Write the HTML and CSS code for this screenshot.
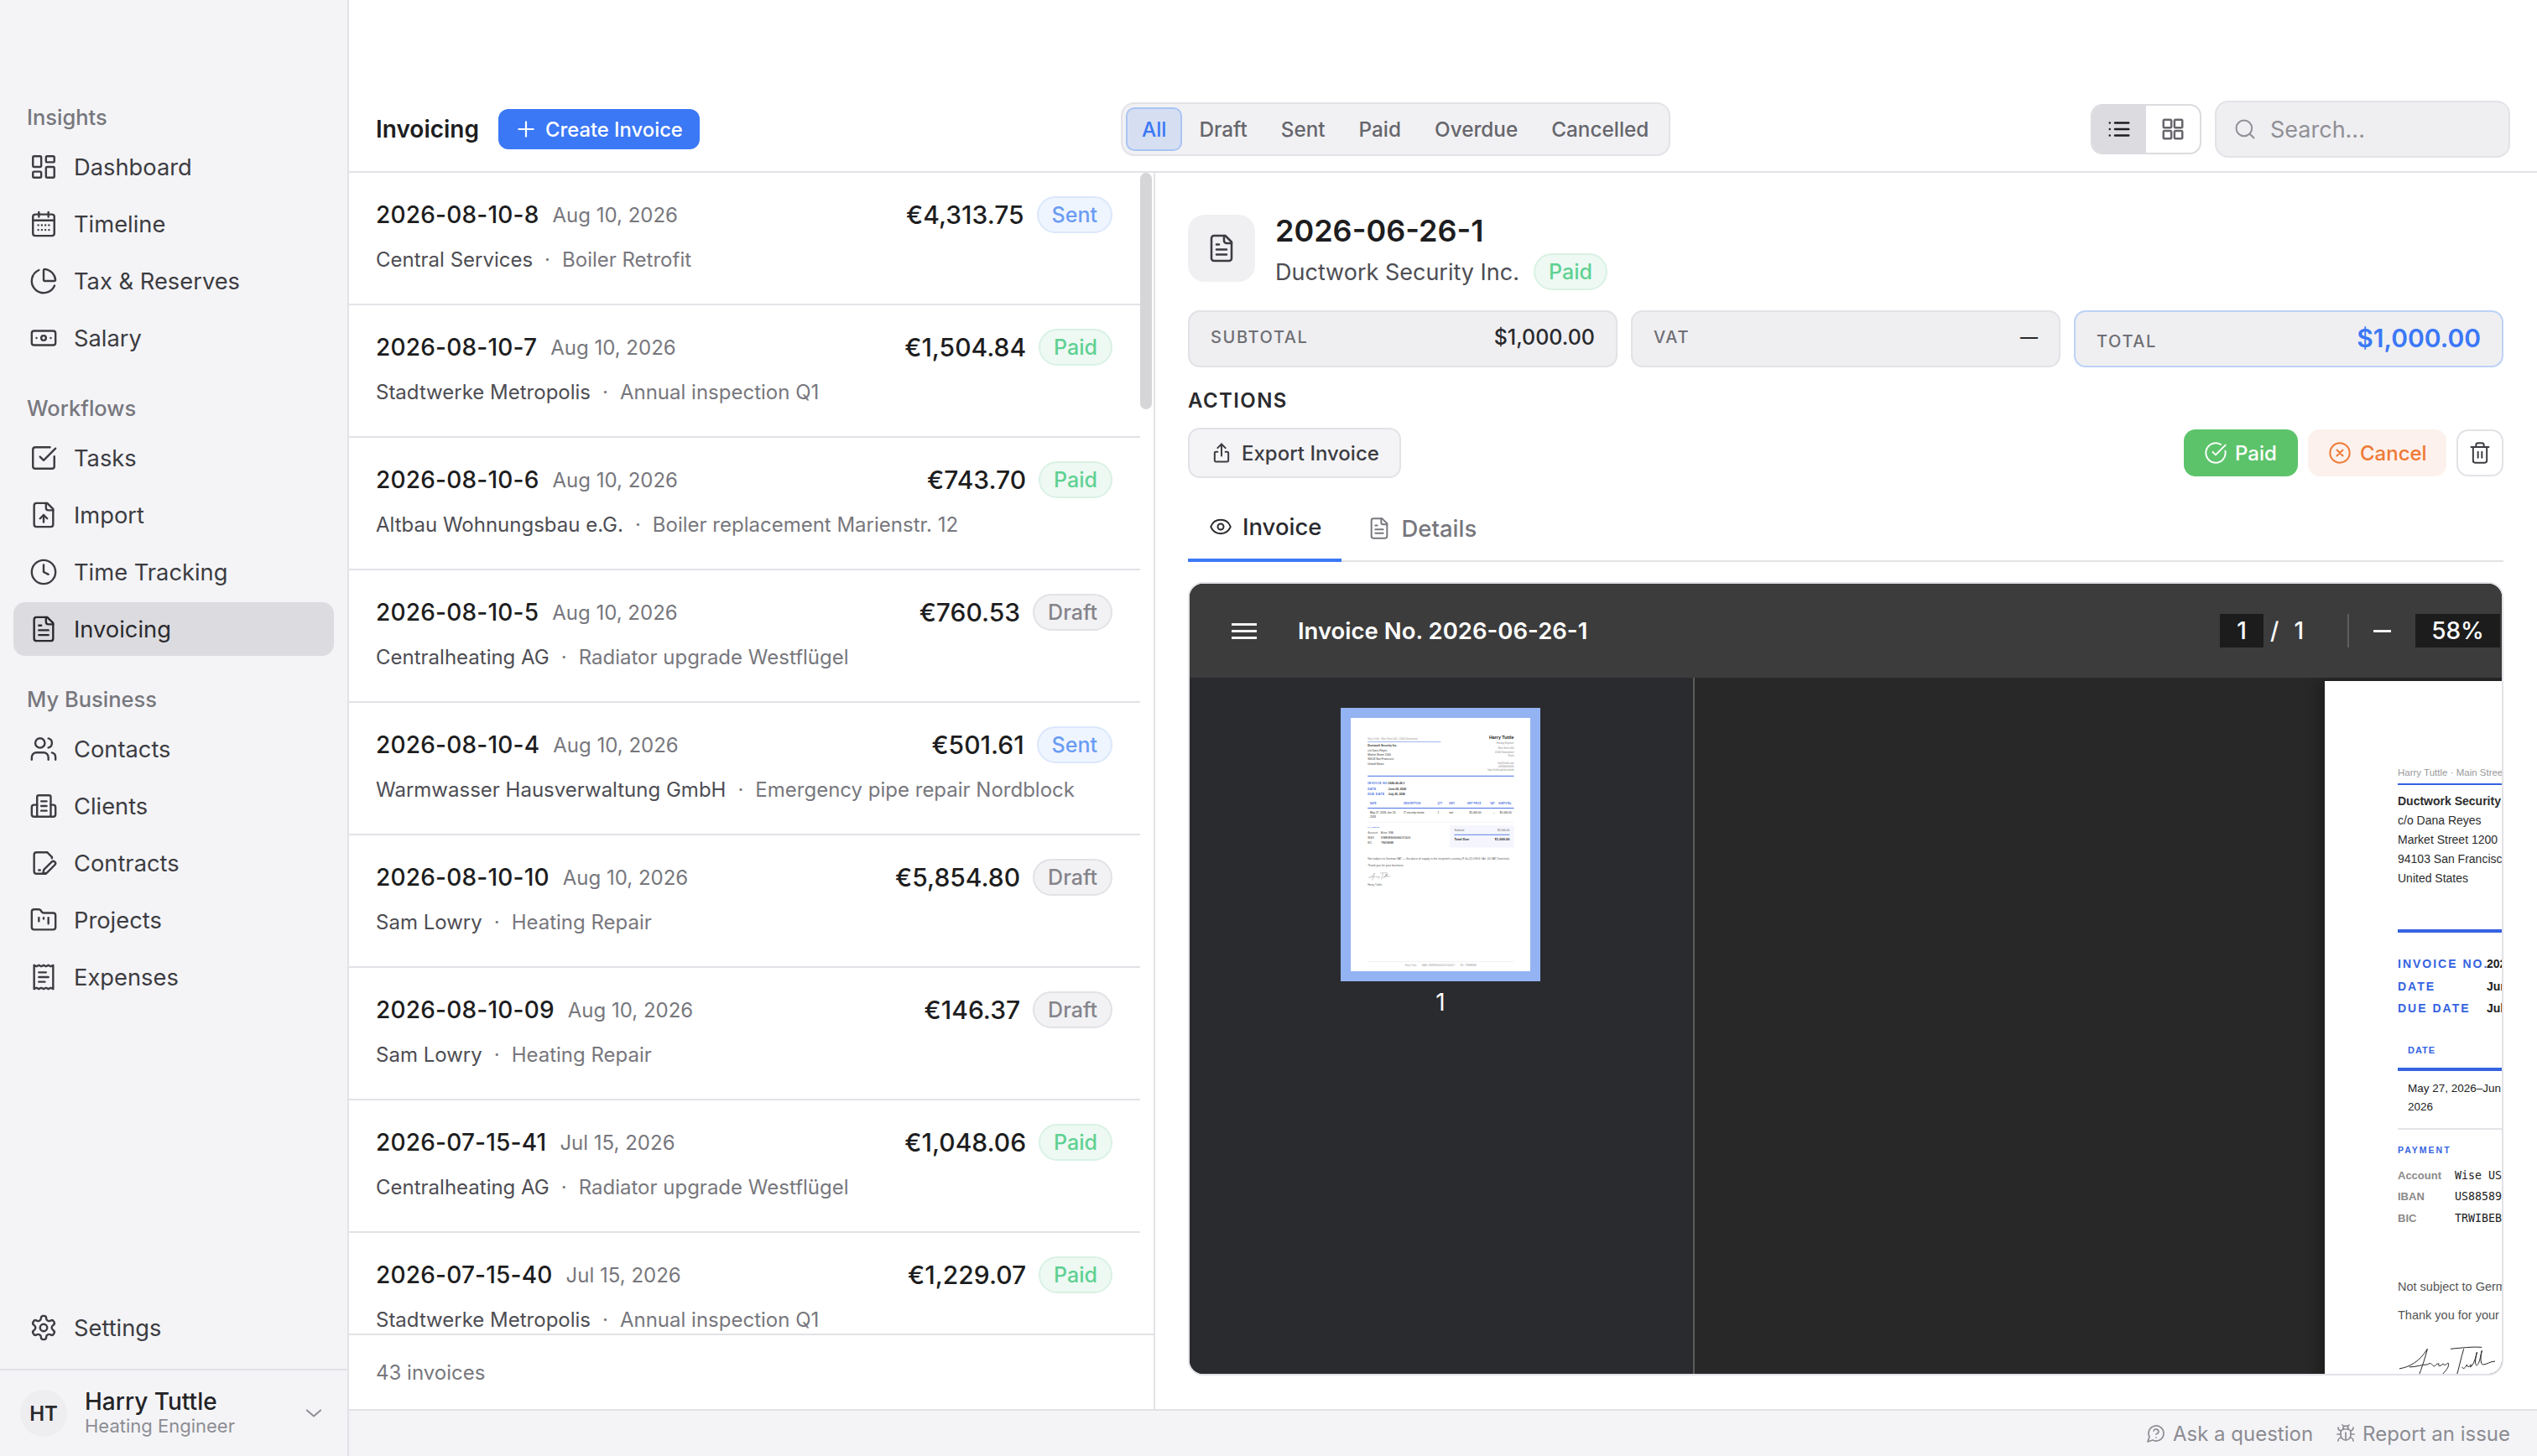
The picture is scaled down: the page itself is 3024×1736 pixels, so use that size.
FILE: index.html
```html
<!DOCTYPE html>
<html lang="en">
<head>
  <meta charset="UTF-8">
  <meta name="viewport" content="width=device-width, initial-scale=1.0">
  <title>Invoicing</title>
  <link rel="stylesheet" href="styles.css">
</head>
<body>

<svg class="sprite" xmlns="http://www.w3.org/2000/svg">
  <symbol id="i-dashboard" viewBox="0 0 24 24"><rect x="3" y="3" width="7" height="9" rx="1"/><rect x="14" y="3" width="7" height="5" rx="1"/><rect x="14" y="12" width="7" height="9" rx="1"/><rect x="3" y="16" width="7" height="5" rx="1"/></symbol>
  <symbol id="i-calendar" viewBox="0 0 24 24"><rect x="3" y="4" width="18" height="18" rx="2"/><path d="M8 2v4M16 2v4M3 9h18M7.500 13h.01M10.500 13h.01M13.500 13h.01M16.500 13h.01M7.500 17h.01M10.500 17h.01M13.500 17h.01M16.500 17h.01"/></symbol>
  <symbol id="i-pie" viewBox="0 0 24 24"><path d="M21 12c.552 0 1.005-.449.95-.998a10 10 0 0 0-8.953-8.951c-.55-.055-.998.398-.998.95v8a1 1 0 0 0 1 1z"/><path d="M21.210 15.890A10 10 0 1 1 8 2.830"/></symbol>
  <symbol id="i-banknote" viewBox="0 0 24 24"><rect x="2" y="6" width="20" height="12" rx="2"/><circle cx="12" cy="12" r="2"/><path d="M6 12h.01M18 12h.01"/></symbol>
  <symbol id="i-tasks" viewBox="0 0 24 24"><path d="M21 10.656V19a2 2 0 0 1-2 2H5a2 2 0 0 1-2-2V5a2 2 0 0 1 2-2h12.344"/><path d="m9 11 3 3L22 4"/></symbol>
  <symbol id="i-import" viewBox="0 0 24 24"><path d="M15 2H6a2 2 0 0 0-2 2v16a2 2 0 0 0 2 2h12a2 2 0 0 0 2-2V7Z"/><path d="M14 2v4a2 2 0 0 0 2 2h4"/><path d="M12 12v6"/><path d="m15 15-3-3-3 3"/></symbol>
  <symbol id="i-clock" viewBox="0 0 24 24"><circle cx="12" cy="12" r="10"/><path d="M12 6v6l4 2"/></symbol>
  <symbol id="i-file" viewBox="0 0 24 24"><path d="M15 2H6a2 2 0 0 0-2 2v16a2 2 0 0 0 2 2h12a2 2 0 0 0 2-2V7Z"/><path d="M14 2v4a2 2 0 0 0 2 2h4"/><path d="M10 9H8M16 13H8M16 17H8"/></symbol>
  <symbol id="i-users" viewBox="0 0 24 24"><path d="M16 21v-2a4 4 0 0 0-4-4H6a4 4 0 0 0-4 4v2"/><circle cx="9" cy="7" r="4"/><path d="M22 21v-2a4 4 0 0 0-3-3.870"/><path d="M16 3.130a4 4 0 0 1 0 7.750"/></symbol>
  <symbol id="i-clients" viewBox="0 0 24 24"><rect x="6.500" y="3" width="11.500" height="18" rx="1.500"/><path d="M10 8h4.500M10 12h4.500M10 16h4.500"/><path d="M6.500 11H4a2 2 0 0 0-2 2v6a2 2 0 0 0 2 2h2.500"/><path d="M18 11h2a2 2 0 0 1 2 2v6a2 2 0 0 1-2 2h-2"/></symbol>
  <symbol id="i-contract" viewBox="0 0 24 24"><path d="M15 3H6a2 2 0 0 0-2 2v14a2 2 0 0 0 2 2h8"/><path d="M15 3l4 4v1"/><path d="m21.400 13.600-6.600 6.600-3.400.8.8-3.400 6.600-6.600a1.800 1.800 0 0 1 2.600 2.600Z"/><path d="M8 18h1"/></symbol>
  <symbol id="i-folder" viewBox="0 0 24 24"><path d="M20 20a2 2 0 0 0 2-2V8a2 2 0 0 0-2-2h-7.900a2 2 0 0 1-1.690-.9L9.600 3.900A2 2 0 0 0 7.930 3H4a2 2 0 0 0-2 2v13a2 2 0 0 0 2 2Z"/><path d="M8 10v3M12 10v1M16 10v5"/></symbol>
  <symbol id="i-receipt" viewBox="0 0 24 24"><path d="M4 2v20l2-1 2 1 2-1 2 1 2-1 2 1 2-1 2 1V2l-2 1-2-1-2 1-2-1-2 1-2-1-2 1Z"/><path d="M14 8H8M16 12H8M13 16H8"/></symbol>
  <symbol id="i-settings" viewBox="0 0 24 24"><path d="M12.220 2h-.44a2 2 0 0 0-2 2v.18a2 2 0 0 1-1 1.730l-.43.25a2 2 0 0 1-2 0l-.15-.08a2 2 0 0 0-2.730.73l-.22.38a2 2 0 0 0 .73 2.730l.15.1a2 2 0 0 1 1 1.720v.51a2 2 0 0 1-1 1.740l-.15.09a2 2 0 0 0-.73 2.730l.22.38a2 2 0 0 0 2.730.73l.15-.08a2 2 0 0 1 2 0l.43.25a2 2 0 0 1 1 1.730V20a2 2 0 0 0 2 2h.44a2 2 0 0 0 2-2v-.18a2 2 0 0 1 1-1.730l.43-.25a2 2 0 0 1 2 0l.15.08a2 2 0 0 0 2.730-.73l.22-.39a2 2 0 0 0-.73-2.730l-.15-.08a2 2 0 0 1-1-1.740v-.5a2 2 0 0 1 1-1.740l.15-.09a2 2 0 0 0 .73-2.730l-.22-.38a2 2 0 0 0-2.730-.73l-.15.08a2 2 0 0 1-2 0l-.43-.25a2 2 0 0 1-1-1.730V4a2 2 0 0 0-2-2z"/><circle cx="12" cy="12" r="3"/></symbol>
  <symbol id="i-chevron" viewBox="0 0 24 24"><path d="m5 9 7 6 7-6"/></symbol>
  <symbol id="i-plus" viewBox="0 0 24 24"><path d="M12 4v16M4 12h16"/></symbol>
  <symbol id="i-list" viewBox="0 0 24 24"><path d="M8 6h13M8 12h13M8 18h13M3 6h.01M3 12h.01M3 18h.01"/></symbol>
  <symbol id="i-grid" viewBox="0 0 24 24"><rect x="3" y="3" width="7.500" height="7.500" rx="1"/><rect x="13.500" y="3" width="7.500" height="7.500" rx="1"/><rect x="3" y="13.500" width="7.500" height="7.500" rx="1"/><rect x="13.500" y="13.500" width="7.500" height="7.500" rx="1"/></symbol>
  <symbol id="i-search" viewBox="0 0 24 24"><circle cx="11" cy="11" r="8"/><path d="m21 21-4.300-4.300"/></symbol>
  <symbol id="i-share" viewBox="0 0 24 24"><path d="M12 15V3"/><path d="m8 7 4-4 4 4"/><path d="M8 11H6a1 1 0 0 0-1 1v8a1 1 0 0 0 1 1h12a1 1 0 0 0 1-1v-8a1 1 0 0 0-1-1h-2"/></symbol>
  <symbol id="i-check" viewBox="0 0 24 24"><path d="M21.800 10A10 10 0 1 1 17 3.340"/><path d="m9 11 3 3L22 4"/></symbol>
  <symbol id="i-cancel" viewBox="0 0 24 24"><circle cx="12" cy="12" r="10"/><path d="m15 9-6 6M9 9l6 6"/></symbol>
  <symbol id="i-trash" viewBox="0 0 24 24"><path d="M3 6h18M19 6v14a2 2 0 0 1-2 2H7a2 2 0 0 1-2-2V6M8 6V4a2 2 0 0 1 2-2h4a2 2 0 0 1 2 2v2M10 11v6M14 11v6"/></symbol>
  <symbol id="i-eye" viewBox="0 0 24 24"><path d="M2.060 12.350a1 1 0 0 1 0-.7 10.750 10.750 0 0 1 19.880 0 1 1 0 0 1 0 .7 10.750 10.750 0 0 1-19.880 0"/><circle cx="12" cy="12" r="3"/></symbol>
  <symbol id="i-help" viewBox="0 0 24 24"><path d="M7.900 20A9 9 0 1 0 4 16.100L2 22Z"/><path d="M9.090 9a3 3 0 0 1 5.830 1c0 2-3 3-3 3"/><path d="M12 17h.01"/></symbol>
  <symbol id="i-bug" viewBox="0 0 24 24"><path d="m8 2 1.880 1.880M14.120 3.880 16 2M9 7.130v-1a3 3 0 1 1 6 0v1"/><path d="M12 20c-3.300 0-6-2.700-6-6v-3a4 4 0 0 1 4-4h4a4 4 0 0 1 4 4v3c0 3.300-2.700 6-6 6"/><path d="M12 20v-9M6.530 9C4.600 8.800 3 7.100 3 5M6 13H2M3 21c0-2.100 1.700-3.900 3.800-4M20.970 5c0 2.100-1.600 3.800-3.500 4M22 13h-4M17.200 17c2.100.1 3.800 1.900 3.800 4"/></symbol>
</svg>

<div class="app">
  <aside class="sidebar">
    <nav class="nav">
      <div class="nav-group">
        <div class="nav-label">Insights</div>
        <a class="nav-item"><svg class="icon"><use href="#i-dashboard"/></svg>Dashboard</a>
        <a class="nav-item"><svg class="icon"><use href="#i-calendar"/></svg>Timeline</a>
        <a class="nav-item"><svg class="icon"><use href="#i-pie"/></svg>Tax &amp; Reserves</a>
        <a class="nav-item"><svg class="icon"><use href="#i-banknote"/></svg>Salary</a>
      </div>
      <div class="nav-group">
        <div class="nav-label">Workflows</div>
        <a class="nav-item"><svg class="icon"><use href="#i-tasks"/></svg>Tasks</a>
        <a class="nav-item"><svg class="icon"><use href="#i-import"/></svg>Import</a>
        <a class="nav-item"><svg class="icon"><use href="#i-clock"/></svg>Time Tracking</a>
        <a class="nav-item active"><svg class="icon"><use href="#i-file"/></svg>Invoicing</a>
      </div>
      <div class="nav-group">
        <div class="nav-label">My Business</div>
        <a class="nav-item"><svg class="icon"><use href="#i-users"/></svg>Contacts</a>
        <a class="nav-item"><svg class="icon"><use href="#i-clients"/></svg>Clients</a>
        <a class="nav-item"><svg class="icon"><use href="#i-contract"/></svg>Contracts</a>
        <a class="nav-item"><svg class="icon"><use href="#i-folder"/></svg>Projects</a>
        <a class="nav-item"><svg class="icon"><use href="#i-receipt"/></svg>Expenses</a>
      </div>
    </nav>
    <div class="nav-bottom">
      <a class="nav-item"><svg class="icon"><use href="#i-settings"/></svg>Settings</a>
    </div>
    <div class="user">
      <div class="avatar">HT</div>
      <div class="user-text">
        <div class="user-name">Harry Tuttle</div>
        <div class="user-role">Heating Engineer</div>
      </div>
      <svg class="icon user-chevron"><use href="#i-chevron"/></svg>
    </div>
  </aside>

  <div class="main">
    <header class="topbar">
      <div class="topbar-left">
        <h1 class="page-title">Invoicing</h1>
        <button class="create-btn"><svg class="icon"><use href="#i-plus"/></svg>Create Invoice</button>
      </div>
      <div class="filters">
        <span class="filter active">All</span>
        <span class="filter">Draft</span>
        <span class="filter">Sent</span>
        <span class="filter">Paid</span>
        <span class="filter">Overdue</span>
        <span class="filter">Cancelled</span>
      </div>
      <div class="topbar-right">
        <div class="view-toggle">
          <span class="view-btn active"><svg class="icon"><use href="#i-list"/></svg></span>
          <span class="view-btn"><svg class="icon"><use href="#i-grid"/></svg></span>
        </div>
        <div class="search"><svg class="icon"><use href="#i-search"/></svg>Search...</div>
      </div>
    </header>

    <div class="content">
      <section class="list">
        <div class="list-scroll">
          <div class="rows">
            <div class="row">
              <div class="row-top"><span class="row-no">2026-08-10-8</span><span class="row-date">Aug 10, 2026</span><span class="row-amount">€4,313.75</span><span class="badge sent">Sent</span></div>
              <div class="row-sub">Central Services<span class="dot">·</span><span class="row-project">Boiler Retrofit</span></div>
            </div>
            <div class="row">
              <div class="row-top"><span class="row-no">2026-08-10-7</span><span class="row-date">Aug 10, 2026</span><span class="row-amount">€1,504.84</span><span class="badge paid">Paid</span></div>
              <div class="row-sub">Stadtwerke Metropolis<span class="dot">·</span><span class="row-project">Annual inspection Q1</span></div>
            </div>
            <div class="row">
              <div class="row-top"><span class="row-no">2026-08-10-6</span><span class="row-date">Aug 10, 2026</span><span class="row-amount">€743.70</span><span class="badge paid">Paid</span></div>
              <div class="row-sub">Altbau Wohnungsbau e.G.<span class="dot">·</span><span class="row-project">Boiler replacement Marienstr. 12</span></div>
            </div>
            <div class="row">
              <div class="row-top"><span class="row-no">2026-08-10-5</span><span class="row-date">Aug 10, 2026</span><span class="row-amount">€760.53</span><span class="badge draft">Draft</span></div>
              <div class="row-sub">Centralheating AG<span class="dot">·</span><span class="row-project">Radiator upgrade Westflügel</span></div>
            </div>
            <div class="row">
              <div class="row-top"><span class="row-no">2026-08-10-4</span><span class="row-date">Aug 10, 2026</span><span class="row-amount">€501.61</span><span class="badge sent">Sent</span></div>
              <div class="row-sub">Warmwasser Hausverwaltung GmbH<span class="dot">·</span><span class="row-project">Emergency pipe repair Nordblock</span></div>
            </div>
            <div class="row">
              <div class="row-top"><span class="row-no">2026-08-10-10</span><span class="row-date">Aug 10, 2026</span><span class="row-amount">€5,854.80</span><span class="badge draft">Draft</span></div>
              <div class="row-sub">Sam Lowry<span class="dot">·</span><span class="row-project">Heating Repair</span></div>
            </div>
            <div class="row">
              <div class="row-top"><span class="row-no">2026-08-10-09</span><span class="row-date">Aug 10, 2026</span><span class="row-amount">€146.37</span><span class="badge draft">Draft</span></div>
              <div class="row-sub">Sam Lowry<span class="dot">·</span><span class="row-project">Heating Repair</span></div>
            </div>
            <div class="row">
              <div class="row-top"><span class="row-no">2026-07-15-41</span><span class="row-date">Jul 15, 2026</span><span class="row-amount">€1,048.06</span><span class="badge paid">Paid</span></div>
              <div class="row-sub">Centralheating AG<span class="dot">·</span><span class="row-project">Radiator upgrade Westflügel</span></div>
            </div>
            <div class="row">
              <div class="row-top"><span class="row-no">2026-07-15-40</span><span class="row-date">Jul 15, 2026</span><span class="row-amount">€1,229.07</span><span class="badge paid">Paid</span></div>
              <div class="row-sub">Stadtwerke Metropolis<span class="dot">·</span><span class="row-project">Annual inspection Q1</span></div>
            </div>
          </div>
          <div class="scroll-gutter"><div class="scroll-thumb"></div></div>
        </div>
        <div class="list-foot">43 invoices</div>
      </section>

      <section class="detail">
        <div class="detail-head">
          <div class="detail-tile"><svg class="icon"><use href="#i-file"/></svg></div>
          <div>
            <h2 class="detail-no">2026-06-26-1</h2>
            <div class="detail-client">Ductwork Security Inc.<span class="badge paid">Paid</span></div>
          </div>
        </div>

        <div class="cards">
          <div class="card"><span class="card-label">Subtotal</span><span class="card-value">$1,000.00</span></div>
          <div class="card"><span class="card-label">VAT</span><span class="card-value dash">—</span></div>
          <div class="card total"><span class="card-label">Total</span><span class="card-value">$1,000.00</span></div>
        </div>

        <div class="actions-label">Actions</div>
        <div class="actions">
          <button class="btn export"><svg class="icon"><use href="#i-share"/></svg>Export Invoice</button>
          <div class="actions-right">
            <button class="btn mark-paid"><svg class="icon"><use href="#i-check"/></svg>Paid</button>
            <button class="btn cancel"><svg class="icon"><use href="#i-cancel"/></svg>Cancel</button>
            <button class="btn trash"><svg class="icon"><use href="#i-trash"/></svg></button>
          </div>
        </div>

        <div class="tabs">
          <span class="tab active"><svg class="icon"><use href="#i-eye"/></svg>Invoice</span>
          <span class="tab"><svg class="icon"><use href="#i-file"/></svg>Details</span>
        </div>

        <div class="viewer">
          <div class="viewer-bar">
            <div class="burger"><span></span><span></span><span></span></div>
            <div class="viewer-title">Invoice No. 2026-06-26-1</div>
            <div class="viewer-controls">
              <span class="viewer-box page">1</span>
              <span class="viewer-sep">/</span>
              <span class="viewer-total">1</span>
              <span class="viewer-divider"></span>
              <span class="viewer-minus"></span>
              <span class="viewer-box zoom">58%</span>
            </div>
          </div>
          <div class="viewer-body">
            <div class="thumbs">
              <div class="thumb">
                <div class="thumb-page">
                  <div class="doc">
                    <div class="doc-head">
                      <div class="doc-to">
                        <div class="doc-sender">Harry Tuttle · Main Street 404 · 01000 Somewhere</div>
                        <div class="doc-addr"><b>Ductwork Security Inc.</b><br>c/o Dana Reyes<br>Market Street 1200<br>94103 San Francisco<br>United States</div>
                      </div>
                      <div class="doc-from">
                        <div class="doc-from-name">Harry Tuttle</div>
                        <div class="doc-from-role">Heating Engineer</div>
                        <div class="doc-from-lines">Main Street 404<br>01000 Somewhere<br>Brazil</div>
                        <div class="doc-from-lines">mail@tuttle.com<br>+000000000000<br>https://tuttle.github.io/tuttle</div>
                      </div>
                    </div>
                    <div class="doc-meta">
                      <span class="doc-meta-key">Invoice No.</span><span>2026-06-26-1</span>
                      <span class="doc-meta-key">Date</span><span>June 26, 2026</span>
                      <span class="doc-meta-key">Due Date</span><span>July 26, 2026</span>
                    </div>
                    <div class="doc-table head">
                      <span>Date</span><span>Description</span><span>Qty</span><span>Unit</span><span class="r">Unit Price</span><span class="r">VAT</span><span class="r">Subtotal</span>
                    </div>
                    <div class="doc-table line">
                      <span class="doc-period">May 27, 2026–Jun 24, 2026</span><span>IT security review</span><span>1</span><span>unit</span><span class="r">$1,000.00</span><span class="r">–</span><span class="r">$1,000.00</span>
                    </div>
                    <div class="doc-bottom">
                      <div>
                        <div class="doc-pay-title">Payment</div>
                        <div class="doc-pay">
                          <span class="doc-pay-key">Account</span><span>Wise USD</span>
                          <span class="doc-pay-key">IBAN</span><span>US88589000000231416</span>
                          <span class="doc-pay-key">BIC</span><span>TRWIBEBB</span>
                        </div>
                      </div>
                      <div class="doc-totals">
                        <div class="doc-totals-row"><span>Subtotal</span><span>$1,000.00</span></div>
                        <div class="doc-totals-row due"><span>Total Due</span><span>$1,000.00</span></div>
                      </div>
                    </div>
                    <p class="doc-note">Not subject to German VAT — the place of supply is the recipient's country (§ 3a (2) UStG / Art. 44 VAT Directive).</p>
                    <p class="doc-note">Thank you for your business.</p>
                    <svg class="doc-sign" viewBox="0 0 120 50"><path d="M2 32C14 30 26 24 36 8c-3 12-9 30-13 38M14 30c8 0 16-3 22-3 M36 27c5-4 6 2 8 2s3-4 6-3c-2 4 2 3 5 0 1 3 4 1 6-1 2 3-1 8-7 14M64 8c12-1 26-3 38-2M80 8c-3 10-6 24-9 34M78 30c2 4 4 0 6-3 0 4 3 3 5 0l-1 3c2 0 6-8 8-18-2 8-3 16 0 16 3-2 4-10 6-18-2 8-2 18 2 17 4 0 8-4 14-4"/></svg>
                    <div class="doc-signed">Harry Tuttle</div>
                    <div class="doc-foot"><span>Harry Tuttle</span><span>IBAN: US88589000000231416017</span><span>BIC: TRWIBEBB</span></div>
                  </div>
                </div>
              </div>
              <div class="thumb-no">1</div>
            </div>
            <div class="pages">
              <div class="doc">
                <div class="doc-head">
                  <div class="doc-to">
                    <div class="doc-sender">Harry Tuttle · Main Street 404 · 01000 Somewhere</div>
                    <div class="doc-addr"><b>Ductwork Security Inc.</b><br>c/o Dana Reyes<br>Market Street 1200<br>94103 San Francisco<br>United States</div>
                  </div>
                  <div class="doc-from">
                    <div class="doc-from-name">Harry Tuttle</div>
                    <div class="doc-from-role">Heating Engineer</div>
                    <div class="doc-from-lines">Main Street 404<br>01000 Somewhere<br>Brazil</div>
                    <div class="doc-from-lines">mail@tuttle.com<br>+000000000000<br>https://tuttle.github.io/tuttle</div>
                  </div>
                </div>
                <div class="doc-meta">
                  <span class="doc-meta-key">Invoice No.</span><span>2026-06-26-1</span>
                  <span class="doc-meta-key">Date</span><span>June 26, 2026</span>
                  <span class="doc-meta-key">Due Date</span><span>July 26, 2026</span>
                </div>
                <div class="doc-table head">
                  <span>Date</span><span>Description</span><span>Qty</span><span>Unit</span><span class="r">Unit Price</span><span class="r">VAT</span><span class="r">Subtotal</span>
                </div>
                <div class="doc-table line">
                  <span class="doc-period">May 27, 2026–Jun 24, 2026</span><span>IT security review</span><span>1</span><span>unit</span><span class="r">$1,000.00</span><span class="r">–</span><span class="r">$1,000.00</span>
                </div>
                <div class="doc-bottom">
                  <div>
                    <div class="doc-pay-title">Payment</div>
                    <div class="doc-pay">
                      <span class="doc-pay-key">Account</span><span>Wise USD</span>
                      <span class="doc-pay-key">IBAN</span><span>US88589000000231416</span>
                      <span class="doc-pay-key">BIC</span><span>TRWIBEBB</span>
                    </div>
                  </div>
                  <div class="doc-totals">
                    <div class="doc-totals-row"><span>Subtotal</span><span>$1,000.00</span></div>
                    <div class="doc-totals-row due"><span>Total Due</span><span>$1,000.00</span></div>
                  </div>
                </div>
                <p class="doc-note">Not subject to German VAT — the place of supply is the recipient's country (§ 3a (2) UStG / Art. 44 VAT Directive).</p>
                <p class="doc-note">Thank you for your business.</p>
                <svg class="doc-sign" viewBox="0 0 120 50"><path d="M2 32C14 30 26 24 36 8c-3 12-9 30-13 38M14 30c8 0 16-3 22-3 M36 27c5-4 6 2 8 2s3-4 6-3c-2 4 2 3 5 0 1 3 4 1 6-1 2 3-1 8-7 14M64 8c12-1 26-3 38-2M80 8c-3 10-6 24-9 34M78 30c2 4 4 0 6-3 0 4 3 3 5 0l-1 3c2 0 6-8 8-18-2 8-3 16 0 16 3-2 4-10 6-18-2 8-2 18 2 17 4 0 8-4 14-4"/></svg>
                <div class="doc-signed">Harry Tuttle</div>
                <div class="doc-foot"><span>Harry Tuttle</span><span>IBAN: US88589000000231416017</span><span>BIC: TRWIBEBB</span></div>
              </div>
            </div>
          </div>
        </div>
      </section>
    </div>

    <footer class="statusbar">
      <span class="status-link"><svg class="icon"><use href="#i-help"/></svg>Ask a question</span>
      <span class="status-link"><svg class="icon"><use href="#i-bug"/></svg>Report an issue</span>
    </footer>
  </div>
</div>

</body>
</html>
```

FILE: styles.css
```css
* {
  box-sizing: border-box;
}
html, body {
  margin: 0;
  height: 100%;
}
body {
  font-family: Inter, "Noto Sans", sans-serif;
  color: #1d1d20;
  background: #fff;
  overflow: hidden;
}
h1, h2, p {
  margin: 0;
}
button {
  font-family: inherit;
}
.sprite {
  position: absolute;
  width: 0;
  height: 0;
}
.icon {
  fill: none;
  stroke: currentColor;
  stroke-width: 1.7;
  stroke-linecap: round;
  stroke-linejoin: round;
  flex: none;
}
.app {
  display: flex;
  height: 100vh;
}

/* sidebar */
.sidebar {
  width: 416px;
  flex: none;
  display: flex;
  flex-direction: column;
  background: #f4f4f7;
  border-right: 2px solid #e2e2e7;
}
.nav {
  flex: 1;
  padding: 123px 16px 0;
}
.nav-group {
  margin-bottom: 35px;
}
.nav-label {
  height: 34px;
  line-height: 34px;
  margin-bottom: 10px;
  padding-left: 16px;
  font-size: 25.500px;
  font-weight: 500;
  color: #77777d;
}
.nav-item {
  display: flex;
  align-items: center;
  gap: 19px;
  height: 64px;
  margin-bottom: 4px;
  padding-left: 19px;
  border-radius: 14px;
  font-size: 27.300px;
  color: #3c3c41;
}
.nav-item .icon {
  width: 34px;
  height: 34px;
}
.nav-item.active {
  background: #dcdce0;
  color: #2a2a2e;
}
.nav-bottom {
  padding: 0 16px 13px;
}
.user {
  display: flex;
  align-items: center;
  height: 104px;
  padding: 0 24px;
  border-top: 2px solid #e2e2e7;
}
.avatar {
  width: 56px;
  height: 56px;
  border-radius: 50%;
  background: #eeeef1;
  display: flex;
  align-items: center;
  justify-content: center;
  font-size: 24px;
  font-weight: 600;
  color: #2a2a2e;
}
.user-text {
  margin-left: 21px;
  flex: 1;
}
.user-name {
  font-size: 28px;
  line-height: 30px;
  font-weight: 500;
  color: #232326;
}
.user-role {
  font-size: 22px;
  line-height: 28px;
  color: #8d8d93;
}
.user-chevron {
  width: 28px;
  height: 28px;
  color: #8d8d93;
  margin-right: 2px;
}

/* main */
.main {
  flex: 1;
  min-width: 0;
  display: flex;
  flex-direction: column;
}
.topbar {
  height: 206px;
  flex: none;
  display: flex;
  align-items: center;
  padding: 104px 32px 0;
  border-bottom: 2px solid #e2e2e7;
}
.topbar-left {
  width: 888px;
  flex: none;
  display: flex;
  align-items: center;
  gap: 23px;
}
.page-title {
  font-size: 28px;
  font-weight: 600;
  color: #1d1d20;
}
.create-btn {
  display: flex;
  align-items: center;
  gap: 10px;
  height: 48px;
  padding: 0 20px;
  border: none;
  border-radius: 12px;
  background: #3b78f6;
  color: #fff;
  font-size: 23.800px;
  font-weight: 500;
}
.create-btn .icon {
  width: 26px;
  height: 26px;
  stroke-width: 2;
}
.filters {
  display: flex;
  align-items: center;
  height: 64px;
  padding: 0 4px;
  border: 2px solid #e2e2e7;
  border-radius: 16px;
  background: #f1f1f4;
  font-size: 24.300px;
  font-weight: 500;
  color: #66666c;
}
.filter {
  padding: 0 20px;
  line-height: 52px;
  height: 52px;
}
.filter.active {
  padding: 0 17px;
  background: #d6dff2;
  border: 2px solid #a9c4f3;
  border-radius: 10px;
  color: #3b78f6;
  line-height: 48px;
}
.topbar-right {
  margin-left: auto;
  display: flex;
  align-items: center;
  gap: 16px;
}
.view-toggle {
  display: flex;
  height: 60px;
  width: 132px;
  border: 2px solid #dcdce0;
  border-radius: 14px;
  overflow: hidden;
}
.view-btn {
  flex: 1;
  display: flex;
  align-items: center;
  justify-content: center;
  color: #66666c;
}
.view-btn.active {
  background: #dcdce0;
  color: #1d1d20;
}
.view-btn .icon {
  width: 30px;
  height: 30px;
  stroke-width: 2;
}
.search {
  display: flex;
  align-items: center;
  gap: 16px;
  width: 352px;
  height: 68px;
  padding-left: 20px;
  background: #efeff2;
  border: 2px solid #e2e2e7;
  border-radius: 16px;
  font-size: 27px;
  color: #8f8f95;
}
.search .icon {
  width: 28px;
  height: 28px;
}

.content {
  flex: 1;
  min-height: 0;
  display: flex;
}

/* invoice list */
.list {
  width: 961px;
  flex: none;
  display: flex;
  flex-direction: column;
  border-right: 2px solid #e2e2e7;
}
.list-scroll {
  flex: 1;
  min-height: 0;
  display: flex;
}
.rows {
  flex: 1;
  min-width: 0;
  overflow: hidden;
}
.row {
  height: 158px;
  padding: 28px 33px 0 32px;
  border-bottom: 2px solid #e2e2e7;
}
.row-top {
  display: flex;
  align-items: center;
  height: 44px;
}
.row-no {
  font-size: 28px;
  font-weight: 500;
  letter-spacing: 0.200px;
  color: #1d1d20;
}
.row-date {
  margin-left: 16px;
  font-size: 24px;
  color: #77777d;
}
.row-amount {
  margin-left: auto;
  margin-right: 15px;
  font-size: 30px;
  font-weight: 500;
  color: #1d1d20;
}
.row-sub {
  margin-top: 14px;
  line-height: 36px;
  font-size: 24px;
  white-space: nowrap;
  color: #4d4d53;
}
.dot {
  margin: 0 14px;
  color: #77777d;
}
.row-project {
  color: #77777d;
}
.badge {
  display: inline-flex;
  align-items: center;
  height: 44px;
  padding: 0 16px;
  border: 2px solid;
  border-radius: 22px;
  font-size: 25px;
  font-weight: 500;
}
.badge.sent {
  background: #eff5fe;
  border-color: #dae7fb;
  color: #6a9cf5;
}
.badge.paid {
  background: #eef9f3;
  border-color: #d9f2e4;
  color: #5fd192;
}
.badge.draft {
  background: #f2f2f4;
  border-color: #e2e2e6;
  color: #85858b;
}
.scroll-gutter {
  width: 16px;
  flex: none;
}
.scroll-thumb {
  width: 14px;
  height: 282px;
  border-radius: 7px;
  background: #d6d6d8;
}
.list-foot {
  height: 90px;
  flex: none;
  display: flex;
  align-items: center;
  padding-left: 32px;
  border-top: 2px solid #e2e2e7;
  font-size: 24px;
  color: #77777d;
}

/* detail */
.detail {
  flex: 1;
  min-width: 0;
  display: flex;
  flex-direction: column;
  padding: 47px 40px 40px 39px;
}
.detail-head {
  display: flex;
  gap: 24px;
  margin-bottom: 24px;
}
.detail-tile {
  width: 80px;
  height: 80px;
  margin-top: 3px;
  border-radius: 20px;
  background: #f0f0f3;
  display: flex;
  align-items: center;
  justify-content: center;
  color: #3c3c41;
}
.detail-tile .icon {
  width: 36px;
  height: 36px;
}
.detail-no {
  font-size: 36px;
  line-height: 44px;
  font-weight: 600;
  color: #1d1d20;
}
.detail-client {
  display: flex;
  align-items: center;
  gap: 17px;
  margin-top: 5px;
  height: 44px;
  font-size: 27px;
  color: #4d4d53;
}
.cards {
  display: grid;
  grid-template-columns: repeat(3, 1fr);
  gap: 16px;
}
.card {
  height: 68px;
  display: flex;
  align-items: center;
  justify-content: space-between;
  padding: 0 25px 5px;
  background: #efeff2;
  border: 2px solid #e2e2e7;
  border-radius: 14px;
}
.card-label {
  font-size: 20px;
  font-weight: 500;
  letter-spacing: 1.600px;
  text-transform: uppercase;
  color: #6f6f75;
}
.card-value {
  font-size: 25px;
  font-weight: 500;
  color: #2a2a2e;
}
.card-value.dash {
  font-size: 21px;
}
.card.total {
  align-items: baseline;
  padding-top: 13px;
  border-color: #bcd2f6;
}
.card.total .card-value {
  font-size: 30px;
  font-weight: 600;
  color: #3b78f6;
}
.actions-label {
  margin-top: 25px;
  line-height: 30px;
  font-size: 24px;
  font-weight: 600;
  letter-spacing: 1.400px;
  text-transform: uppercase;
  color: #2a2a2e;
}
.actions {
  margin-top: 17px;
  height: 60px;
  display: flex;
  align-items: center;
  justify-content: space-between;
}
.actions-right {
  display: flex;
  gap: 12px;
}
.btn {
  display: flex;
  align-items: center;
  height: 56px;
  border-radius: 14px;
  border: none;
  font-size: 24px;
  font-weight: 500;
}
.btn .icon {
  width: 28px;
  height: 28px;
}
.btn.export {
  height: 60px;
  gap: 10px;
  padding: 0 24px;
  background: #f4f4f7;
  border: 2px solid #e2e2e7;
  color: #3c3c41;
}
.btn.mark-paid {
  width: 136px;
  padding-left: 24px;
  gap: 9px;
  background: #5cc36a;
  color: #fff;
}
.btn.cancel {
  width: 165px;
  padding-left: 24px;
  gap: 10px;
  background: #fcf1ec;
  color: #ef7a35;
}
.btn.trash {
  width: 56px;
  justify-content: center;
  background: #fff;
  border: 2px solid #e2e2e7;
  color: #3c3c41;
}
.tabs {
  margin-top: 20px;
  display: flex;
  gap: 6px;
  height: 80px;
  border-bottom: 2px solid #e2e2e7;
}
.tab {
  display: flex;
  align-items: center;
  gap: 12px;
  height: 80px;
  padding: 0 24px 0 25px;
  font-size: 27.500px;
  font-weight: 500;
  color: #77777d;
}
.tab .icon {
  width: 28px;
  height: 28px;
}
.tab.active {
  color: #2a2a2e;
  border-bottom: 4px solid #3b78f6;
}

/* pdf viewer */
.viewer {
  flex: 1;
  min-height: 0;
  margin-top: 24px;
  display: flex;
  flex-direction: column;
  border: 2px solid #e2e2e7;
  border-radius: 18px;
  overflow: hidden;
  background: #282828;
}
.viewer-bar {
  height: 112px;
  flex: none;
  display: flex;
  align-items: center;
  padding: 0 2px 0 50px;
  background: #3c3c3c;
  color: #fff;
}
.burger {
  width: 30px;
}
.burger span {
  display: block;
  height: 3px;
  margin: 5px 0;
  background: #f2f2f2;
}
.viewer-title {
  margin-left: 49px;
  font-size: 27.500px;
  font-weight: 600;
}
.viewer-controls {
  margin-left: auto;
  display: flex;
  align-items: center;
  font-size: 28px;
  font-weight: 500;
}
.viewer-box {
  height: 40px;
  display: flex;
  align-items: center;
  justify-content: center;
  background: #1c1c1c;
}
.viewer-box.page {
  width: 52px;
}
.viewer-box.zoom {
  width: 101px;
}
.viewer-sep {
  margin-left: 8px;
}
.viewer-total {
  margin-left: 18px;
}
.viewer-divider {
  width: 2px;
  height: 40px;
  margin-left: 52px;
  background: #5e5e5e;
}
.viewer-minus {
  width: 21px;
  height: 3px;
  margin: 0 29px 0 29px;
  background: #f2f2f2;
}
.viewer-body {
  flex: 1;
  min-height: 0;
  display: flex;
}
.thumbs {
  width: 602px;
  flex: none;
  padding: 36px 2px 0 0;
  background: #2a2b2e;
  border-right: 2px solid #5a5a5a;
  display: flex;
  flex-direction: column;
  align-items: center;
}
.thumb {
  padding: 12px;
  background: #93b3f2;
}
.thumb-page {
  width: 214px;
  height: 302px;
  overflow: hidden;
  background: #fff;
}
.thumb-page .doc {
  transform: scale(0.2324);
  transform-origin: 0 0;
}
.thumb-no {
  margin-top: 10px;
  font-size: 28px;
  line-height: 30px;
  color: #fff;
}
.pages {
  flex: 1;
  min-width: 0;
  display: flex;
  overflow: hidden;
  padding: 4px 0 0 751px;
}

/* the invoice page itself */
.doc {
  width: 921px;
  height: 1302px;
  flex: none;
  display: flex;
  flex-direction: column;
  padding: 85px 84px 28px 87px;
  background: #fff;
  box-shadow: -8px 0 14px rgba(0, 0, 0, 0.25);
  font-family: "Liberation Sans", Arial, sans-serif;
  font-size: 14px;
  color: #2c2c2c;
}
.doc-head {
  display: flex;
  justify-content: space-between;
  height: 215px;
  border-bottom: 4px solid #3563e0;
}
.doc-to {
  width: 375px;
  padding-top: 14px;
}
.doc-sender {
  font-size: 11.500px;
  line-height: 20px;
  padding-bottom: 3px;
  border-bottom: 2px solid #3563e0;
  color: #999;
  white-space: nowrap;
}
.doc-addr {
  margin-top: 8px;
  line-height: 23px;
}
.doc-from {
  text-align: right;
  color: #8a8a8a;
  font-size: 11.500px;
}
.doc-from-name {
  font-size: 23px;
  line-height: 30px;
  font-weight: bold;
  color: #222;
}
.doc-from-role {
  margin-top: 4px;
  line-height: 18px;
}
.doc-from-lines {
  margin-top: 11px;
  line-height: 18.500px;
}
.doc-from-lines + .doc-from-lines {
  margin-top: 18px;
}
.doc-meta {
  margin-top: 24px;
  display: grid;
  grid-template-columns: 106px 1fr;
  line-height: 26.500px;
  font-size: 14px;
  font-weight: bold;
  color: #222;
}
.doc-meta-key {
  letter-spacing: 2px;
  text-transform: uppercase;
  color: #3563e0;
  white-space: nowrap;
}
.doc-table {
  display: grid;
  grid-template-columns: 173px 173px 59px 65px 100px 70px 1fr;
  padding: 0 12px;
}
.doc-table.head {
  margin-top: 24px;
  padding-bottom: 9px;
  line-height: 24px;
  font-size: 11px;
  font-weight: bold;
  letter-spacing: 1px;
  text-transform: uppercase;
  color: #3563e0;
  border-bottom: 4px solid #3563e0;
}
.doc-table.line {
  padding-top: 10px;
  padding-bottom: 14px;
  line-height: 22px;
  font-size: 13.500px;
  color: #222;
  border-bottom: 2px solid #e4e4e8;
}
.doc-period {
  padding-right: 30px;
}
.r {
  text-align: right;
}
.doc-bottom {
  margin-top: 17px;
  height: 113px;
  display: flex;
  justify-content: space-between;
}
.doc-pay-title {
  line-height: 14px;
  font-size: 10.500px;
  font-weight: bold;
  letter-spacing: 2px;
  text-transform: uppercase;
  color: #3563e0;
}
.doc-pay {
  margin-top: 11px;
  display: grid;
  grid-template-columns: 68px 1fr;
  line-height: 25.500px;
  font-family: "DejaVu Sans Mono", monospace;
  font-size: 13.300px;
  color: #222;
}
.doc-pay-key {
  font-family: "Liberation Sans", Arial, sans-serif;
  font-size: 13px;
  font-weight: bold;
  color: #8a8a8a;
}
.doc-totals {
  width: 328px;
  padding: 18px 22px;
  background: #f5f6fd;
}
.doc-totals-row {
  display: flex;
  justify-content: space-between;
  font-size: 14px;
  color: #666;
}
.doc-totals-row.due {
  margin-top: 11px;
  padding-top: 10px;
  border-top: 5px solid #6f93ea;
  font-size: 17px;
  font-weight: bold;
  color: #222;
}
.doc-note {
  margin-top: 14px;
  line-height: 20px;
  font-size: 14.500px;
  white-space: nowrap;
  color: #555;
}
.doc-bottom + .doc-note {
  margin-top: 47px;
}
.doc-sign {
  margin-top: 22px;
  width: 118px;
  height: 50px;
  fill: none;
  stroke: #222;
  stroke-width: 1;
}
.doc-signed {
  margin-top: 8px;
  font-size: 14px;
  color: #555;
}
.doc-foot {
  margin-top: auto;
  padding-top: 10px;
  display: flex;
  justify-content: center;
  gap: 28px;
  border-top: 2px solid #e4e4e8;
  font-size: 11px;
  color: #999;
}

/* status bar */
.statusbar {
  height: 56px;
  flex: none;
  display: flex;
  align-items: center;
  justify-content: flex-end;
  gap: 27px;
  padding-right: 32px;
  background: #f4f4f7;
  border-top: 2px solid #e2e2e7;
  font-size: 24px;
  color: #8c8c92;
}
.status-link {
  display: flex;
  align-items: center;
  gap: 8px;
}
.status-link .icon {
  width: 24px;
  height: 24px;
}
```
